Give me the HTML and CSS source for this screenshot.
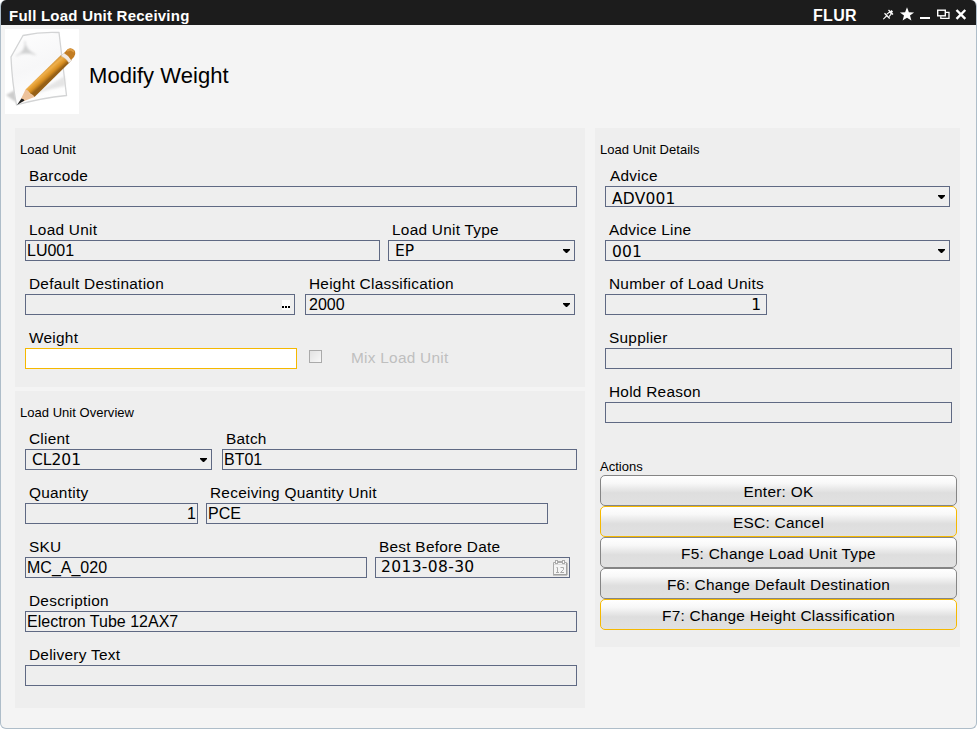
FILE: index.html
```html
<!DOCTYPE html>
<html lang="en">
<head>
<meta charset="utf-8">
<title>Full Load Unit Receiving</title>
<link rel="stylesheet" href="styles.css">
</head>
<body>
<main class="window">
  <header class="titlebar">
    <span class="name">Full Load Unit Receiving</span>
    <span class="code">FLUR</span>
    <svg class="controls" width="94" height="25" viewBox="0 0 94 25" fill="none" stroke="#fff">
      <path d="M.3 19.2L4 15.5" stroke-width="1.1"/>
      <path d="M1.5 13.3L6.7 18.5" stroke-width="1.3"/>
      <path d="M3.6 14.4L6.6 12L8.4 13.8L6 16.6" stroke-width="1.1"/>
      <path d="M5.5 10L10 14.5" stroke-width="1.3"/>
      <path d="M7 11.5L8.6 10L10 11.4L8.8 13Z" fill="#fff" stroke="none"/>
      <path d="M24 7.3L25.9 12.2L31.1 12.4L27 15.6L28.4 20.6L24 17.8L19.6 20.6L21 15.6L16.9 12.4L22.1 12.2Z" fill="#fff" stroke="none"/>
      <path d="M37 18H47" stroke-width="2"/>
      <path d="M62 12.3H66V18.3H57.8V16.3" stroke-width="1.3"/>
      <rect x="54.7" y="10.2" width="7.6" height="5.6" stroke-width="1.4"/>
      <path d="M73.5 10L82.3 18.8M82.3 10L73.5 18.8" stroke-width="2.4"/>
    </svg>
  </header>

  <section class="heading">
    <svg class="edit-icon" width="74" height="85" viewBox="0 0 74 85">
      <defs>
        <linearGradient id="paper" x1="0" y1="0" x2="0.3" y2="1">
          <stop offset="0" stop-color="#fefefe"/><stop offset="0.55" stop-color="#f7f7f8"/><stop offset="1" stop-color="#fefefe"/>
        </linearGradient>
        <linearGradient id="wood" x1="36" y1="43" x2="43" y2="51" gradientUnits="userSpaceOnUse">
          <stop offset="0" stop-color="#cf8f35"/><stop offset="0.3" stop-color="#efb04c"/><stop offset="0.7" stop-color="#d88e20"/><stop offset="1" stop-color="#966016"/>
        </linearGradient>
        <filter id="soft" x="-20%" y="-20%" width="140%" height="140%"><feGaussianBlur stdDeviation="1"/></filter>
      </defs>
      <rect width="74" height="85" fill="#fff"/>
      <path d="M1 66L10 61L12 74Z" fill="#ccc" filter="url(#soft)"/>
      <path d="M18 6.5Q36 2.5 54 3.5L61.5 66.5Q36 69 11.5 76Q7 53 6 28Z" fill="url(#paper)" stroke="#d3d4d5" stroke-width="1.3"/>
      <path d="M30 65L60 47V57Q44 60 30 65Z" fill="#dcdcdc" opacity="0.7" filter="url(#soft)"/>
      <path d="M20 12Q20 20 31 26Q19 22 11 27Q21 22 20 12Z" fill="#d0d1d2" stroke="#dededf" filter="url(#soft)"/>
      <path d="M20.5 60.5L56 26L65 33L29.5 68Z" fill="url(#wood)"/>
      <path d="M20.5 60.5L14 74L29.5 68Q28 65 25 65Q24 61 20.5 60.5Z" fill="#edc29b"/>
      <path d="M16.5 69.5L12 76L19.5 71.5Q19 69.8 16.5 69.5Z" fill="#222"/>
      <path d="M56 27L59 24Q63 26 67 31L64 34Q61 29 56 27Z" fill="#f3ebe3" stroke="#cbbba8" stroke-width=".5"/>
      <path d="M59 24L63 20Q67 18 70 22Q71 25 69 28L66 31Q63 26 59 24Z" fill="#c27c22"/>
      <path d="M62 22Q66 19 69 23" fill="none" stroke="#dc9a40" stroke-width="2"/>
    </svg>
    <h1>Modify Weight</h1>
  </section>

  <div class="columns">
    <div class="left">
      <section class="panel load-unit">
        <h2>Load Unit</h2>
        <div class="row"><div class="field w552"><label>Barcode</label><div class="box"></div></div></div>
        <div class="row g8">
          <div class="field w355"><label>Load Unit</label><div class="box">LU001</div></div>
          <div class="field w187"><label>Load Unit Type</label><div class="box select">EP</div></div>
        </div>
        <div class="row g10">
          <div class="field w270"><label>Default Destination</label><div class="box lookup"><span class="dots"><i></i><i></i><i></i></span></div></div>
          <div class="field w270"><label>Height Classification</label><div class="box select plain">2000</div></div>
        </div>
        <div class="row g12">
          <div class="field w272"><label>Weight</label><div class="box active"></div></div>
          <div class="check"><span class="tick"></span><span class="caption">Mix Load Unit</span></div>
        </div>
      </section>
      <section class="panel overview">
        <h2>Load Unit Overview</h2>
        <div class="row g10">
          <div class="field w187"><label>Client</label><div class="box select">CL201</div></div>
          <div class="field w355"><label>Batch</label><div class="box">BT01</div></div>
        </div>
        <div class="row g8">
          <div class="field w173"><label>Quantity</label><div class="box number">1</div></div>
          <div class="field w342"><label>Receiving Quantity Unit</label><div class="box">PCE</div></div>
        </div>
        <div class="row g8">
          <div class="field w342"><label>SKU</label><div class="box">MC_A_020</div></div>
          <div class="field w195"><label>Best Before Date</label><div class="box date"><span>2013-08-30</span>
            <svg width="16" height="17" viewBox="0 0 16 17" fill="none" stroke="#aaa">
              <path d="M1.5 3.5H14.5V15.5H1.5Z" fill="#f5f5f5"/>
              <path d="M2 5.5H14" stroke="#ddd"/>
              <path d="M15 4V16H1" stroke="#999"/>
              <rect x="3.5" y="1.5" width="2" height="3" fill="#fff"/><rect x="10.5" y="1.5" width="2" height="3" fill="#fff"/>
              <path d="M6 2.5H10"/>
              <path d="M4.5 8.5H5.5V13M4 13.5H7M8.5 8.5H11.5V10.5L8.5 13.5H12"/>
            </svg></div></div>
        </div>
        <div class="row"><div class="field w552"><label>Description</label><div class="box">Electron Tube 12AX7</div></div></div>
        <div class="row"><div class="field w552"><label>Delivery Text</label><div class="box"></div></div></div>
      </section>
    </div>

    <section class="panel details">
      <h2>Load Unit Details</h2>
      <div class="row"><div class="field w345"><label class="inset">Advice</label><div class="box select lower">ADV001</div></div></div>
      <div class="row"><div class="field w345"><label>Advice Line</label><div class="box select low">001</div></div></div>
      <div class="row"><div class="field w162"><label>Number of Load Units</label><div class="box number wide">1</div></div></div>
      <div class="row"><div class="field w347"><label>Supplier</label><div class="box"></div></div></div>
      <div class="row"><div class="field w347"><label>Hold Reason</label><div class="box"></div></div></div>
      <h2 class="actions-title">Actions</h2>
      <div class="actions">
        <button>Enter: OK</button>
        <button class="gold">ESC: Cancel</button>
        <button>F5: Change Load Unit Type</button>
        <button>F6: Change Default Destination</button>
        <button class="gold">F7: Change Height Classification</button>
      </div>
    </section>
  </div>
</main>
</body>
</html>
```
FILE: styles.css
```css
* { box-sizing: border-box; }
body { margin: 0; background: #fff; font: 16px "Liberation Sans", Arial, sans-serif; color: #000; }
h1, h2 { margin: 0; font-weight: normal; }
.window { width: 977px; height: 729px; background: #f4f4f4; border: 1px solid #aebdc9; border-top: 0; border-radius: 6px; overflow: hidden; }
.titlebar { height: 25px; margin: 0 -1px; padding-left: 9px; display: flex; background: #1c1c1c; color: #fff; font-weight: bold; line-height: 31px; }
.name { width: 804px; font-size: 15px; letter-spacing: .23px; white-space: nowrap; }
.code { width: 70px; font-size: 16px; letter-spacing: .3px; }
.controls { display: block; }
.heading { height: 103px; padding: 4px 0 0 4px; display: flex; }
.heading h1 { margin-left: 10px; padding-top: 34px; font-size: 22px; line-height: 26px; letter-spacing: .06px; }
.edit-icon { display: block; }
.columns { display: flex; gap: 10px; align-items: flex-start; padding-left: 14px; }
.left { width: 570px; display: flex; flex-direction: column; gap: 4px; }
.panel { background: #eee; }
.load-unit { height: 259px; }
.overview { height: 317px; }
.details { width: 365px; height: 519px; }
h2 { padding: 14px 5px 8px; font-size: 13px; line-height: 15px; letter-spacing: .03px; }
.row { height: 54px; padding-left: 10px; display: flex; }
.g8 { gap: 8px; }
.g10 { gap: 10px; }
.g12 { gap: 12px; }
.field { flex: none; }
label { display: block; height: 21px; line-height: 21px; padding-left: 4px; font-size: 15.4px; letter-spacing: .26px; white-space: nowrap; }
label.inset { padding-left: 5px; }
.w552 { width: 552px; }
.w355 { width: 355px; }
.w347 { width: 347px; }
.w345 { width: 345px; }
.w342 { width: 342px; }
.w272 { width: 272px; }
.w270 { width: 270px; }
.w195 { width: 195px; }
.w187 { width: 187px; }
.w173 { width: 173px; }
.w162 { width: 162px; }
.box { height: 21px; border: 1px solid #5f6983; padding: 0 1px; line-height: 19px; white-space: nowrap; }
.active { background: #fff; border-color: #f5b800; }
.select { display: flex; justify-content: space-between; padding: 0 4px 0 6px; font: 15.5px/21px "DejaVu Sans", sans-serif; }
.select::after { content: ""; width: 7px; height: 4px; margin-top: 8px; background: #000; clip-path: polygon(0 0, 100% 0, 100% 25%, 57% 100%, 43% 100%, 0 25%); }
.select.plain { padding-left: 3px; font: inherit; line-height: 19px; }
.select.low { line-height: 23px; letter-spacing: .2px; }
.select.lower { line-height: 25px; letter-spacing: .2px; }
.number { text-align: right; }
.wide { padding-right: 5px; font: 15.5px/21px "DejaVu Sans", sans-serif; }
.lookup { display: flex; justify-content: flex-end; padding: 5px 4px 0 0; }
.dots { width: 8px; height: 10px; background: #fff; display: flex; gap: 1px; align-items: flex-end; padding-bottom: 2px; }
.dots i { width: 2px; height: 2px; background: #000; }
.check { display: flex; align-items: flex-start; padding-top: 23px; gap: 29px; color: #bfbfbf; }
.tick { width: 13px; height: 13px; border: 1px solid #aaa; background: linear-gradient(135deg, #e2e2e2, #f8f8f8); }
.caption { font-size: 15.4px; letter-spacing: .26px; line-height: 18px; margin-top: -1px; }
.date { display: flex; justify-content: space-between; padding: 0 1px 0 5px; font: 15.5px/18px "DejaVu Sans", sans-serif; letter-spacing: .35px; }
.date svg { display: block; margin-top: 1px; }
.actions-title { padding: 24px 5px 1px; }
.actions { padding-left: 5px; display: flex; flex-direction: column; }
button { width: 357px; height: 31px; padding: 2px 0 0; border: 1px solid #858585; border-radius: 5px; background: linear-gradient(#fff, #f8f8f8 25%, #dedede 58%, #e1e1e1); font: inherit; font-size: 15.4px; line-height: 18px; letter-spacing: .28px; color: #000; }
button.gold { border-color: #f5b800; }
```
